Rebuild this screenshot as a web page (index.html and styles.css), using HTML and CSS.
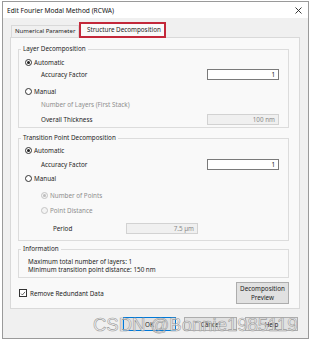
FILE: index.html
```html
<!DOCTYPE html>
<html lang="en">
<head>
    <meta charset="UTF-8">
    <title>Edit Fourier Modal Method (RCWA)</title>
    <link rel="stylesheet" href="styles.css">
</head>
<body>
    <div class="dlg">
        <!--标题栏-->
        <div class="titlebar">
            <span class="title">Edit Fourier Modal Method (RCWA)</span>
            <svg class="close" width="7" height="7" viewBox="0 0 7 7">
                <path d="M0.5 0.5 L6.5 6.5 M6.5 0.5 L0.5 6.5" stroke="#222" stroke-width="0.9" fill="none"/>
            </svg>
        </div>
        <div class="body">
            <!--选项卡-->
            <div class="tabs">
                <div class="tab">Numerical Parameter</div>
                <div class="tab sel">Structure Decomposition</div>
            </div>
            <div class="panel">
                <!--层分解-->
                <div class="group g-layer">
                    <div class="legend">Layer Decomposition</div>
                    <div class="row m2"><span class="radio on"></span>Automatic</div>
                    <div class="row sub"><span>Accuracy Factor</span><span class="field">1</span></div>
                    <div class="row m5"><span class="radio"></span>Manual</div>
                    <div class="row sub m1 off"><span>Number of Layers (First Stack)</span></div>
                    <div class="row sub m3"><span>Overall Thickness</span><span class="field dis">100 nm</span></div>
                </div>
                <!--过渡点分解-->
                <div class="group g-trans">
                    <div class="legend">Transition Point Decomposition</div>
                    <div class="row m1"><span class="radio on"></span>Automatic</div>
                    <div class="row sub m2"><span>Accuracy Factor</span><span class="field">1</span></div>
                    <div class="row m2"><span class="radio"></span>Manual</div>
                    <div class="row sub m5 off"><span class="radio dis on"></span>Number of Points</div>
                    <div class="row sub m3 off"><span class="radio dis"></span>Point Distance</div>
                    <div class="row period m6"><span class="plabel">Period</span><span class="field dis">7.5 µm</span></div>
                </div>
                <!--信息-->
                <div class="group g-info">
                    <div class="legend">Information</div>
                    <div class="line first">Maximum total number of layers: 1</div>
                    <div class="line">Minimum transition point distance: 150 nm</div>
                </div>
                <div class="foot">
                    <span class="check">
                        <svg width="7" height="7" viewBox="0 0 7 7"><path d="M1.2 3.6 L2.8 5.2 L5.9 1.6" stroke="#222" stroke-width="0.8" fill="none"/></svg>
                    </span>
                    <span>Remove Redundant Data</span>
                    <span class="btn preview">Decomposition<br>Preview</span>
                </div>
            </div>
            <!--底部按钮-->
            <div class="buttons">
                <span class="btn ok">OK</span>
                <span class="btn">Cancel</span>
                <span class="btn">Help</span>
            </div>
        </div>
        <div class="watermark">CSDN @Bonnie1985119</div>
    </div>
</body>
</html>
```

FILE: styles.css
```css
*{
    padding: 0;
    margin: 0;
    box-sizing: border-box;
}
body{
    background-color: #fff;
    font-family: "Noto Sans", "Open Sans", sans-serif;
    font-size: 6.3px;
    color: #1e1e1e;
}
.dlg{
    position: relative;
    margin: 1px 0 0 2px;
    width: 307px;
    height: 338px;
    border: 1px solid #9a9a9a;
    background-color: #f0f0f0;
}
.titlebar{
    display: flex;
    align-items: center;
    height: 16px;
    padding-left: 4px;
    background-color: #fff;
}
.titlebar .title{
    font-size: 6.6px;
    color: #111;
}
.titlebar .close{
    margin-left: auto;
    margin-right: 6px;
}
.body{
    padding-top: 5px;
}
.tabs{
    display: flex;
    align-items: flex-end;
    height: 14px;
    margin-left: 8px;
    white-space: nowrap;
}
.tab{
    height: 12px;
    line-height: 11px;
    width: 68px;
    padding-left: 3px;
    font-size: 6px;
    border: 1px solid #d9d9d9;
    border-bottom: none;
    background-color: #f0f0f0;
}
.tab.sel{
    position: relative;
    z-index: 1;
    width: 87px;
    height: 16px;
    margin-bottom: -1px;
    line-height: 12px;
    padding-left: 6px;
    font-size: 6.3px;
    border: 2px solid #c3283a;
    background-color: #fafafa;
}
.panel{
    margin-left: 7px;
    width: 290px;
    height: 272px;
    padding-left: 7px;
    border: 1px solid #d9d9d9;
    background-color: #f9f9f9;
    white-space: nowrap;
}
.group{
    width: 271px;
    border: 1px solid #dcdcdc;
}
.g-layer{
    margin-top: 11px;
    padding-bottom: 2px;
}
.g-trans{
    margin-top: 10px;
    padding-bottom: 6px;
}
.g-info{
    margin-top: 8px;
    padding-bottom: 3px;
}
.legend{
    display: table;
    height: 10px;
    line-height: 10px;
    margin: -6px 0 0 2px;
    padding: 0 2px;
    background-color: #f9f9f9;
    color: #1e1e1e;
}
.row{
    display: flex;
    align-items: center;
    height: 12px;
    padding-left: 6px;
}
.row.sub{
    padding-left: 22px;
}
.row.period{
    padding-left: 34px;
}
.row.off{
    color: #8e8e8e;
}
.m1{ margin-top: 1px; }
.m2{ margin-top: 2px; }
.m3{ margin-top: 3px; }
.m5{ margin-top: 5px; }
.m6{ margin-top: 6px; }
.plabel{
    width: 73px;
}
.radio{
    position: relative;
    width: 7px;
    height: 7px;
    margin-right: 2px;
    border: 1px solid #333;
    border-radius: 50%;
    background-color: #fff;
}
.radio.on::after{
    content: "";
    position: absolute;
    top: 1px;
    left: 1px;
    width: 3px;
    height: 3px;
    border-radius: 50%;
    background-color: #222;
}
.radio.dis{
    border-color: #c4c4c4;
    background-color: #f4f4f4;
}
.radio.dis.on::after{
    background-color: #bdbdbd;
}
.field{
    width: 72px;
    height: 11px;
    margin-left: auto;
    margin-right: 9px;
    padding-right: 3px;
    line-height: 9px;
    text-align: right;
    border: 1px solid #7a7a7a;
    background-color: #fff;
    color: #111;
}
.field.dis{
    border-color: #d2d2d2;
    background-color: #f0f0f0;
    color: #8a8a8a;
}
.period .field{
    margin-left: 0;
}
.line{
    height: 8px;
    line-height: 8px;
    padding-left: 9px;
}
.line.first{
    margin-top: 4px;
}
.foot{
    display: flex;
    align-items: center;
    height: 22px;
    margin-top: 4px;
    padding-left: 1px;
}
.check{
    display: flex;
    width: 8px;
    height: 8px;
    margin-right: 3px;
    border: 1px solid #333;
    background-color: #fff;
    align-items: center;
    justify-content: center;
}
.btn{
    display: flex;
    align-items: center;
    justify-content: center;
    text-align: center;
    border: 1px solid #adadad;
    background-color: #e1e1e1;
}
.preview{
    width: 53px;
    height: 22px;
    margin-left: auto;
    margin-right: 10px;
    line-height: 9px;
}
.buttons{
    display: flex;
    justify-content: flex-end;
    gap: 8px;
    margin-top: 8px;
    margin-right: 10px;
}
.buttons .btn{
    width: 53px;
    height: 14px;
}
.buttons .ok{
    border: 1.5px solid #0078d7;
}
.watermark{
    position: absolute;
    left: 90px;
    top: 312px;
    font-family: "Liberation Sans", sans-serif;
    font-size: 18.5px;
    line-height: 22px;
    color: rgba(255, 255, 255, 0.55);
    -webkit-text-stroke: 0.6px #999;
    white-space: nowrap;
}
```
